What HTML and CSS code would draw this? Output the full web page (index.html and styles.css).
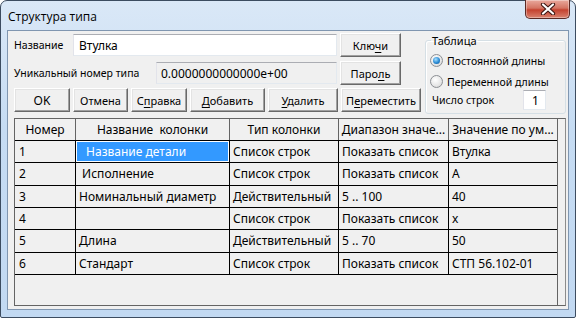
FILE: index.html
```html
<!DOCTYPE html>
<html lang="ru">
<head>
    <meta charset="UTF-8">
    <title>Структура типа</title>
    <link rel="stylesheet" href="styles.css">
</head>
<body>
    <div class="window">
        <div class="titlebar">
            <span class="title">Структура типа</span>
            <span class="close">
                <svg width="16" height="12" viewBox="0 0 16 12">
                    <path d="M3 1.5 L13 10.5 M13 1.5 L3 10.5" stroke="#3b1410" stroke-width="4.2" stroke-linecap="round"/>
                    <path d="M3 1.5 L13 10.5 M13 1.5 L3 10.5" stroke="#ffffff" stroke-width="2.2" stroke-linecap="round"/>
                </svg>
            </span>
        </div>
        <div class="client">
            <div class="top">
                <div class="fields">
                    <div class="row">
                        <span class="lbl name-lbl">Название</span>
                        <div class="edit name-edit">Втулка</div>
                        <button class="btn side">Клю<u>ч</u>и</button>
                    </div>
                    <div class="row">
                        <span class="lbl uid-lbl">Уникальный номер типа</span>
                        <div class="edit readonly">0.0000000000000e+00</div>
                        <button class="btn side">Паро<u>л</u>ь</button>
                    </div>
                    <div class="row buttons">
                        <button class="btn b-ok">OK</button>
                        <button class="btn b-cancel">Отмена</button>
                        <button class="btn b-help">С<u>п</u>равка</button>
                        <button class="btn b-add"><u>Д</u>обавить</button>
                        <button class="btn b-del"><u>У</u>далить</button>
                        <button class="btn b-move">П<u>е</u>реместить</button>
                    </div>
                </div>
                <fieldset class="group">
                    <legend>Таблица</legend>
                    <div class="radio-row">
                        <span class="radio checked"></span>
                        <span>Постоянной длины</span>
                    </div>
                    <div class="radio-row">
                        <span class="radio"></span>
                        <span>Переменной длины</span>
                    </div>
                    <div class="count-row">
                        <span>Число строк</span>
                        <div class="edit count-edit">1</div>
                    </div>
                </fieldset>
            </div>
            <div class="grid">
                <div class="grid-body">
                    <div class="grid-row head">
                        <div class="cell">Номер</div>
                        <div class="cell">Название&nbsp; колонки</div>
                        <div class="cell">Тип колонки</div>
                        <div class="cell">Диапазон значе...</div>
                        <div class="cell">Значение по ум...</div>
                    </div>
                    <div class="grid-row">
                        <div class="cell">1</div>
                        <div class="cell"><span class="selected">&nbsp;Название детали</span></div>
                        <div class="cell">Список строк</div>
                        <div class="cell">Показать список</div>
                        <div class="cell">Втулка</div>
                    </div>
                    <div class="grid-row">
                        <div class="cell">2</div>
                        <div class="cell">&nbsp;Исполнение</div>
                        <div class="cell">Список строк</div>
                        <div class="cell">Показать список</div>
                        <div class="cell">А</div>
                    </div>
                    <div class="grid-row">
                        <div class="cell">3</div>
                        <div class="cell">Номинальный диаметр</div>
                        <div class="cell">Действительный</div>
                        <div class="cell">5 .. 100</div>
                        <div class="cell">40</div>
                    </div>
                    <div class="grid-row">
                        <div class="cell">4</div>
                        <div class="cell"></div>
                        <div class="cell">Список строк</div>
                        <div class="cell">Показать список</div>
                        <div class="cell">x</div>
                    </div>
                    <div class="grid-row">
                        <div class="cell">5</div>
                        <div class="cell">Длина</div>
                        <div class="cell">Действительный</div>
                        <div class="cell">5 .. 70</div>
                        <div class="cell">50</div>
                    </div>
                    <div class="grid-row">
                        <div class="cell">6</div>
                        <div class="cell">Стандарт</div>
                        <div class="cell">Список строк</div>
                        <div class="cell">Показать список</div>
                        <div class="cell">СТП 56.102-01</div>
                    </div>
                </div>
            </div>
        </div>
    </div>
</body>
</html>
```

FILE: styles.css
```css
body {
    margin: 0;
    font-family: 'Noto Sans', 'DejaVu Sans', sans-serif;
    font-size: 10.5px;
    color: #000;
    background: #fff;
}
.window {
    width: 576px;
    height: 318px;
    box-sizing: border-box;
    border: 1px solid #3c4c60;
    border-radius: 7px 7px 2px 2px;
    background: linear-gradient(#dae8f7, #c6dcf3 40%, #c2d9f2);
    padding: 0 6px 7px 6px;
    display: flex;
    flex-direction: column;
}
.titlebar {
    height: 29px;
    display: flex;
    justify-content: space-between;
    align-items: flex-start;
}
.title {
    font-family: 'Open Sans', 'Noto Sans', sans-serif;
    font-size: 12px;
    padding: 7px 0 0 1px;
    color: #000;
}
.close {
    width: 45px;
    height: 19px;
    margin-top: -1px;
    margin-right: -1px;
    box-sizing: border-box;
    border: 1px solid #5a2a25;
    border-top: none;
    border-radius: 0 0 5px 5px;
    background: linear-gradient(#e9a99d, #d47463 45%, #c4422f 55%, #d9826f);
    display: flex;
    align-items: center;
    justify-content: center;
    box-shadow: inset 0 0 0 1px rgba(255, 255, 255, 0.35);
}
.client {
    flex: 1;
    border: 1px solid #8096b0;
    background: #f0f0f0;
    padding: 2px 2px 3px 6px;
    display: flex;
    flex-direction: column;
}
.top {
    display: flex;
    gap: 4px;
}
.fields {
    width: 407px;
    display: flex;
    flex-direction: column;
}
.row {
    display: flex;
    align-items: center;
    height: 24px;
}
.row + .row {
    margin-top: 4px;
}
.row.buttons {
    margin-top: 3px;
    gap: 3px;
}
.name-lbl {
    width: 59px;
}
.uid-lbl {
    width: 142px;
}
.edit {
    height: 22px;
    box-sizing: border-box;
    border: 1px solid;
    border-color: #abadb3 #e3e9ef #e3e9ef #e2e3ea;
    background: #fff;
    padding-left: 5px;
    display: flex;
    align-items: center;
    font-size: 12px;
}
.name-edit {
    width: 264px;
}
.readonly {
    width: 181px;
    background: #f0f0f0;
    padding-left: 4px;
}
.btn {
    height: 24px;
    box-sizing: border-box;
    border: 1px solid;
    border-color: #fff #696969 #696969 #fff;
    box-shadow: inset -1px -1px 0 #a0a0a0, inset 1px 1px 0 #e3e3e3;
    background: #f0f0f0;
    font-family: inherit;
    font-size: 11px;
    padding: 0;
    color: #000;
}
.btn u {
    text-underline-offset: 2px;
}
.side {
    width: 61px;
    margin-left: 3px;
}
.b-ok { width: 56px; font-size: 12px; }
.b-cancel { width: 55px; }
.b-help { width: 56px; }
.b-add { width: 75px; }
.b-del { width: 70px; }
.b-move { width: 80px; }
.group {
    width: 141px;
    height: 81px;
    box-sizing: border-box;
    margin: 0;
    padding: 2px 0 0 4px;
    border: 1px solid #d5dfe5;
    border-radius: 3px;
    box-shadow: inset 1px 1px 0 #fff;
}
.group legend {
    padding: 0 1px;
    margin-left: 1px;
    font-size: 11px;
}
.radio-row {
    display: flex;
    align-items: center;
    height: 21px;
    gap: 4px;
}
.radio {
    width: 13px;
    height: 13px;
    box-sizing: border-box;
    border-radius: 50%;
    border: 1px solid #8c8f94;
    background: radial-gradient(circle at 40% 35%, #fff, #e6e6e6 60%, #cfcfcf);
    position: relative;
}
.radio.checked::after {
    content: "";
    position: absolute;
    left: 2px;
    top: 2px;
    width: 7px;
    height: 7px;
    border-radius: 50%;
    background: radial-gradient(circle at 40% 35%, #a6e0ff, #2a8ad4 55%, #0b4f8f);
}
.count-row {
    display: flex;
    align-items: center;
    justify-content: space-between;
    padding: 0 19px 0 2px;
    margin-top: -2px;
    height: 20px;
}
.count-edit {
    width: 23px;
    height: 20px;
    padding-left: 8px;
}
.grid {
    flex: 1;
    margin-top: 4px;
    border: 1px solid #646464;
    border-right-color: #8c8c8c;
    display: flex;
    background: #f0f0f0;
}
.grid-body {
    width: 542px;
    border-right: 1px solid #646464;
    font-size: 12px;
}
.grid-row {
    display: grid;
    grid-template-columns: 61px 154px 109px 110px 108px;
    height: 22.33px;
    box-sizing: border-box;
    border-bottom: 1px solid #000;
}
.grid-row.head {
    height: 22px;
}
.cell {
    border-right: 1px solid #000;
    padding-left: 3px;
    display: flex;
    align-items: center;
    white-space: nowrap;
    overflow: hidden;
}
.cell:last-child {
    border-right: none;
}
.head .cell {
    justify-content: center;
    padding-left: 0;
    border-right-color: #646464;
}
.grid-row .cell:first-child {
    padding-left: 4px;
}
.head .cell:first-child {
    padding-left: 0;
}
.grid-row .cell:nth-child(2) {
    position: relative;
}
.selected {
    position: absolute;
    left: 1px;
    top: 1px;
    right: 1px;
    bottom: 1px;
    background: #3399ff;
    color: #fff;
    display: flex;
    align-items: center;
    padding-left: 6px;
    box-shadow: 0 0 0 1px #fff;
}
```
